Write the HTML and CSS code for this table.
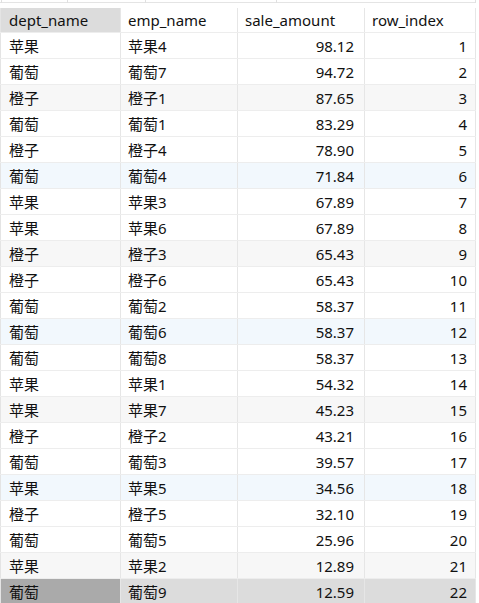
FILE: index.html
```html
<!DOCTYPE html>
<html>
<head>
<meta charset="utf-8">
<link rel="stylesheet" href="styles.css">
</head>
<body>
<div class="topstrip">
  <span class="tick t1"></span><span class="tick t2"></span><span class="tick t3"></span><span class="tick t4"></span><span class="tick t5"></span>
</div>
<table class="grid">
  <colgroup><col class="c1"><col class="c2"><col class="c3"><col class="c4"></colgroup>
  <thead>
    <tr><th class="sel">dept_name</th><th>emp_name</th><th>sale_amount</th><th>row_index</th></tr>
  </thead>
  <tbody>
    <tr><td>苹果</td><td>苹果4</td><td class="num">98.12</td><td class="num">1</td></tr>
    <tr><td>葡萄</td><td>葡萄7</td><td class="num">94.72</td><td class="num">2</td></tr>
    <tr class="alt"><td>橙子</td><td>橙子1</td><td class="num">87.65</td><td class="num">3</td></tr>
    <tr><td>葡萄</td><td>葡萄1</td><td class="num">83.29</td><td class="num">4</td></tr>
    <tr><td>橙子</td><td>橙子4</td><td class="num">78.90</td><td class="num">5</td></tr>
    <tr class="blue"><td>葡萄</td><td>葡萄4</td><td class="num">71.84</td><td class="num">6</td></tr>
    <tr><td>苹果</td><td>苹果3</td><td class="num">67.89</td><td class="num">7</td></tr>
    <tr><td>苹果</td><td>苹果6</td><td class="num">67.89</td><td class="num">8</td></tr>
    <tr class="alt"><td>橙子</td><td>橙子3</td><td class="num">65.43</td><td class="num">9</td></tr>
    <tr><td>橙子</td><td>橙子6</td><td class="num">65.43</td><td class="num">10</td></tr>
    <tr><td>葡萄</td><td>葡萄2</td><td class="num">58.37</td><td class="num">11</td></tr>
    <tr class="blue"><td>葡萄</td><td>葡萄6</td><td class="num">58.37</td><td class="num">12</td></tr>
    <tr><td>葡萄</td><td>葡萄8</td><td class="num">58.37</td><td class="num">13</td></tr>
    <tr><td>苹果</td><td>苹果1</td><td class="num">54.32</td><td class="num">14</td></tr>
    <tr class="alt"><td>苹果</td><td>苹果7</td><td class="num">45.23</td><td class="num">15</td></tr>
    <tr><td>橙子</td><td>橙子2</td><td class="num">43.21</td><td class="num">16</td></tr>
    <tr><td>葡萄</td><td>葡萄3</td><td class="num">39.57</td><td class="num">17</td></tr>
    <tr class="blue"><td>苹果</td><td>苹果5</td><td class="num">34.56</td><td class="num">18</td></tr>
    <tr><td>橙子</td><td>橙子5</td><td class="num">32.10</td><td class="num">19</td></tr>
    <tr><td>葡萄</td><td>葡萄5</td><td class="num">25.96</td><td class="num">20</td></tr>
    <tr class="alt"><td>苹果</td><td>苹果2</td><td class="num">12.89</td><td class="num">21</td></tr>
    <tr class="cur"><td class="curcell">葡萄</td><td>葡萄9</td><td class="num">12.59</td><td class="num">22</td></tr>
  </tbody>
</table>
</body>
</html>
```
FILE: styles.css
```css
html, body {
  margin: 0;
  padding: 0;
  background: #ffffff;
  overflow: hidden;
}
body {
  font-family: "Noto Sans", "Noto Sans CJK SC", sans-serif;
  font-size: 15px;
  color: #111111;
}
.topstrip {
  position: relative;
  height: 6px;
  border-top: 2px solid #ffffff;
}
.topstrip::before {
  content: "";
  position: absolute;
  left: 0;
  right: 3px;
  top: 0;
  height: 1px;
  background: #e4e4e4;
}
.tick {
  position: absolute;
  top: -2px;
  width: 1px;
  height: 3px;
  background: #e0e0e0;
}
.t1 { left: 1px; }
.t2 { left: 67px; }
.t3 { left: 145px; }
.t4 { left: 276px; }
.t5 { left: 475px; }
.grid {
  border-collapse: collapse;
  table-layout: fixed;
  width: 476px;
  border-left: 1px solid #e4e4e4;
}
.c1 { width: 120px; }
.c2 { width: 117px; }
.c3 { width: 127px; }
.c4 { width: 111px; }
th, td {
  padding: 0 7px 0 7px;
  text-align: left;
  white-space: nowrap;
  overflow: hidden;
  border-right: 1px solid #e6e6e6;
  border-bottom: 1px solid #ededed;
}
th:first-child, td:first-child {
  padding-left: 8px;
}
th {
  height: 24px;
  font-weight: normal;
  background: #ffffff;
}
th.sel {
  background: #dcdcdc;
}
td {
  height: 25px;
}
td.num {
  text-align: right;
  padding-right: 10px;
}
td.num:last-child {
  padding-right: 8px;
}
tr.alt td {
  background: #f7f7f7;
}
tr.blue td {
  background: #f2f8fd;
}
tr.cur td {
  background: #dcdcdc;
}
tr.cur td.curcell {
  background: #aaaaaa;
}
```
